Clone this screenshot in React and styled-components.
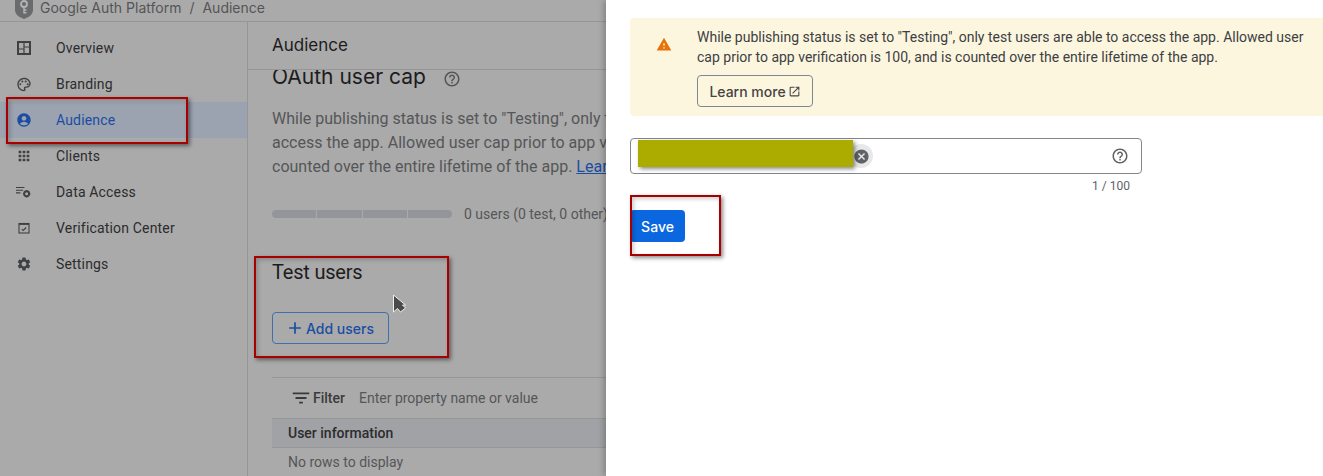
import React from "react";
import styled, { createGlobalStyle } from "styled-components";
import { MdOutlinePalette, MdAccountCircle, MdApps, MdSettings, MdHelpOutline, MdWarning, MdOutlineOpenInNew, MdCancel, MdAdd, MdFilterList } from "react-icons/md";

const Global = createGlobalStyle`
  html, body { margin: 0; padding: 0; background: #aaaaaa; }
  body { font-family: Roboto, "Liberation Sans", sans-serif; overflow: hidden; }
`;
const GS = `Inter, Roboto, sans-serif`;

const Page = styled.div`
  position: relative; width: 1323px; height: 476px; display: flex; overflow: hidden; background: #aaaaaa;
`;
const Console = styled.div`
  width: 606px; flex: none; display: flex; flex-direction: column; height: 476px;
`;
const TopBar = styled.header`
  height: 21px; flex: none; display: flex; align-items: flex-start; gap: 7px; padding-left: 15px;
  border-bottom: 1px solid #969696; font-family: ${GS}; font-size: 14px; color: #555557;
`;
const Crumbs = styled.div`
  display: flex; gap: 8px; line-height: 16px; white-space: nowrap;
`;
const Logo = styled.svg`
  width: 18px; height: 19px; flex: none;
`;
const Body = styled.div`
  flex: 1; display: flex; min-height: 0;
`;
const Side = styled.nav`
  width: 247px; flex: none; border-right: 1px solid #969696; padding-top: 8px;
`;
const NavRow = styled.div`
  height: 36px; display: flex; align-items: center; padding-left: 16px; gap: 16px;
  font-size: 14px; letter-spacing: .17px; color: ${p => (p.$active ? "#1a4da3" : "#2c2c2e")};
  background: ${p => (p.$active ? "#9ba2b0" : "transparent")};
`;
const NavIcon = styled.span`
  width: 16px; height: 16px; display: flex; align-items: center; justify-content: center; flex: none;
  margin-right: 8px; color: ${p => (p.$active ? "#1a4da3" : "#3f4042")};
`;
const Main = styled.main`
  flex: 1; min-width: 0; display: flex; flex-direction: column; overflow: hidden;
`;
const SubHead = styled.div`
  height: 48px; flex: none; display: flex; align-items: center; padding: 0 0 1px 24px; box-sizing: border-box;
  border-bottom: 1px solid #969696; font-family: ${GS}; font-size: 17px; color: #1c1c1e;
`;
const Scroll = styled.div`
  flex: 1; overflow: hidden; padding-left: 24px;
`;
const Inner = styled.div`
  margin-top: -6px; width: 400px;
`;
const H2 = styled.h2`
  margin: 0; font-family: ${GS}; font-weight: 400; font-size: 21px; line-height: 26px; color: #1c1c1e;
  display: flex; align-items: center; gap: 17px; white-space: nowrap;
`;
const HelpWrap = styled.span`
  display: flex; color: #555557; margin-top: 3px;
`;
const Para = styled.p`
  margin: 17px 0 0; font-size: 16px; line-height: 24px; color: #555658; white-space: nowrap;
`;
const InlineLink = styled.a`
  color: #1a4da3; text-decoration: underline;
`;
const Usage = styled.div`
  display: flex; align-items: center; gap: 12px; margin-top: 25px; font-size: 14px; color: #555658; white-space: nowrap; height: 20px;
`;
const Bar = styled.div`
  display: flex; gap: 1px; width: 180px; height: 8px; border-radius: 4px; overflow: hidden; flex: none;
`;
const BarSeg = styled.span`
  flex: 1; background: #93959a;
`;
const TestHead = styled.h2`
  margin: 35px 0 0; font-weight: 400; font-size: 20px; letter-spacing: -.2px; line-height: 26px; color: #1c1c1e;
`;
const AddBtn = styled.button`
  margin-top: 27px; width: 117px; height: 32px; display: flex; align-items: center; justify-content: center; gap: 1px;
  border: 1px solid #3f6fb0; border-radius: 4px; background: transparent; color: #1a4da3;
  font-family: ${GS}; font-weight: 500; font-size: 14px; padding: 0 2px 0 0;
`;
const TableBox = styled.div`
  margin-top: 33px; width: 334px; border-top: 1px solid #969696;
`;
const FilterRow = styled.div`
  height: 40px; display: flex; align-items: center; padding-left: 18px; font-size: 14px; color: #555658; white-space: nowrap;
`;
const FilterLabel = styled.span`
  font-weight: 500; color: #3a3a3c; margin: 0 14px 0 1px;
`;
const HeadRow = styled.div`
  height: 28px; display: flex; align-items: center; padding-left: 16px; background: #a0a2a5;
  border-top: 1px solid #969696; border-bottom: 1px solid #969696; font-size: 14px; font-weight: 500; color: #2c2c2e;
`;
const EmptyRow = styled.div`
  height: 27px; display: flex; align-items: center; padding-left: 16px; font-size: 14px; color: #555658;
`;
const Panel = styled.aside`
  flex: 1; min-width: 0; background: #fff; padding-top: 18px; box-shadow: -2px 0 6px rgba(0,0,0,.25); position: relative;
`;
const Banner = styled.div`
  margin-left: 24px; height: 98px; background: #fdf6df; border-radius: 4px 0 0 4px; display: flex; box-sizing: border-box; padding: 9px 0 0 26px;
`;
const WarnIcon = styled.span`
  width: 16px; height: 16px; margin: 9px 25px 0 0; color: #e8710a; display: flex;
`;
const BannerBody = styled.div`
  font-size: 14px; line-height: 20px; color: #3c4043;
`;
const BannerText = styled.p`
  margin: 0; width: 615px;
`;
const LearnBtn = styled.button`
  margin-top: 8px; width: 116px; height: 32px; display: flex; align-items: center; justify-content: center; gap: 2px;
  border: 1px solid #7c8793; border-radius: 4px; background: transparent; color: #444;
  font-family: ${GS}; font-weight: 500; font-size: 14px; padding: 0;
`;
const Field = styled.div`
  margin: 22px 0 0 24px; width: 512px; height: 36px; box-sizing: border-box; border: 1px solid #80868b; border-radius: 4px;
  display: flex; align-items: center; justify-content: flex-end; padding-right: 12px; position: relative; color: #5f6368;
`;
const ChipClose = styled.span`
  position: absolute; left: 218px; top: 5px; width: 24px; height: 24px; border-radius: 50%; background: #e8e8e9; color: #5f6368;
  display: flex; align-items: center; justify-content: center;
`;
const Redact = styled.div`
  position: absolute; left: 638px; top: 140px; width: 215px; height: 27px; background: #abab00; box-shadow: 2px 2px 4px rgba(0,0,0,.45);
`;
const Counter = styled.div`
  margin-left: 24px; width: 500px; text-align: right; font-size: 12px; line-height: 16px; margin-top: 4px; color: #5f6368;
`;
const SaveBtn = styled.button`
  display: block; margin: 16px 0 0 24px; width: 55px; height: 32px; border: 0; border-radius: 4px; background: #0b67e0; color: #fff;
  font-family: ${GS}; font-weight: 500; font-size: 14px; padding: 0;
`;
const Callout = styled.div`
  position: absolute; box-sizing: border-box; border: 2px solid #a80000; box-shadow: 2px 2px 4px rgba(0,0,0,.45), inset 2px 2px 4px rgba(0,0,0,.2);
  pointer-events: none;
`;
const Pointer = styled.svg`
  position: absolute; left: 392px; top: 294px; width: 16px; height: 24px;
`;

const OverviewIcon = () => (
  <svg width="16" height="16" viewBox="0 0 16 16" fill="none" stroke="currentColor">
    <rect x="2" y="2" width="12" height="12" strokeWidth="2" />
    <path d="M8 2v12M8 7h6M2 9h6" strokeWidth="1.2" />
  </svg>
);
const DataIcon = () => (
  <svg width="18" height="16" viewBox="0 0 18 16" fill="currentColor">
    <path d="M0 2.400h9.500v1.200H0zM0 5.400h8v1.200H0zM0 8.400h5v1.200H0z" />
    <circle cx="12" cy="10" r="2.800" fill="none" stroke="currentColor" strokeWidth="2.200" />
    <path d="M11.300 5.800h1.400v1.400h-1.400zM11.300 12.800h1.400v1.400h-1.400zM7.800 9.300h1.400v1.400H7.800zM14.800 9.300h1.400v1.400h-1.400z" />
  </svg>
);
const VerifyIcon = () => (
  <svg width="14" height="14" viewBox="0 0 14 14" fill="none" stroke="currentColor">
    <rect x="2" y="2.500" width="10" height="9.500" strokeWidth="1.100" />
    <path d="M2 3h10" strokeWidth="1.800" />
    <path d="M4.800 8.200l1.400 1.300 3-3" strokeWidth="1.100" />
  </svg>
);

const navItems = [
  ["Overview", <OverviewIcon />],
  ["Branding", <MdOutlinePalette size={17} />],
  ["Audience", <MdAccountCircle size={18} />, true],
  ["Clients", <MdApps size={20} />],
  ["Data Access", <DataIcon />],
  ["Verification Center", <VerifyIcon />],
  ["Settings", <MdSettings size={18} />],
];

export default function App() {
  return (
    <Page>
      <Global />
      <Console>
        <TopBar>
          <Logo viewBox="0 0 18 19">
            <path d="M0 0h18v10c0 4.500-4.500 7.500-9 9-4.500-1.500-9-4.500-9-9z" fill="#6a6b6d" />
            <circle cx="9" cy="4" r="3" fill="none" stroke="#b4b4b4" strokeWidth="1.800" />
            <path d="M9 6.600v7M9 10h2.500M9 12.800h2.500" stroke="#b4b4b4" strokeWidth="1.500" />
          </Logo>
          <Crumbs>
            <span>Google Auth Platform</span><span>/</span><span>Audience</span>
          </Crumbs>
        </TopBar>
        <Body>
          <Side>
            {navItems.map(([label, icon, active]) => (
              <NavRow key={label} $active={active}>
                <NavIcon $active={active}>{icon}</NavIcon>
                {label}
              </NavRow>
            ))}
          </Side>
          <Main>
            <SubHead>Audience</SubHead>
            <Scroll>
              <Inner>
                <H2>OAuth user cap <HelpWrap><MdHelpOutline size={18} /></HelpWrap></H2>
                <Para>
                  While publishing status is set to "Testing", only test users are able to<br />
                  access the app. Allowed user cap prior to app verification is 100, and is<br />
                  counted over the entire lifetime of the app. <InlineLink>Learn more</InlineLink>
                </Para>
                <Usage>
                  <Bar><BarSeg /><BarSeg /><BarSeg /><BarSeg /></Bar>
                  0 users (0 test, 0 other)
                </Usage>
                <TestHead>Test users</TestHead>
                <AddBtn><MdAdd size={20} />Add users</AddBtn>
                <TableBox>
                  <FilterRow>
                    <MdFilterList size={22} color="#3a3a3c" />
                    <FilterLabel>Filter</FilterLabel>
                    Enter property name or value
                  </FilterRow>
                  <HeadRow>User information</HeadRow>
                  <EmptyRow>No rows to display</EmptyRow>
                </TableBox>
              </Inner>
            </Scroll>
          </Main>
        </Body>
      </Console>
      <Panel>
        <Banner>
          <WarnIcon><MdWarning size={17} /></WarnIcon>
          <BannerBody>
            <BannerText>While publishing status is set to "Testing", only test users are able to access the app. Allowed user cap prior to app verification is 100, and is counted over the entire lifetime of the app.</BannerText>
            <LearnBtn>Learn more<MdOutlineOpenInNew size={13} /></LearnBtn>
          </BannerBody>
        </Banner>
        <Field>
          <ChipClose><MdCancel size={17} /></ChipClose>
          <MdHelpOutline size={18} />
        </Field>
        <Counter>1 / 100</Counter>
        <SaveBtn>Save</SaveBtn>
      </Panel>
      <Redact />
      <Callout style={{ left: 6, top: 97, width: 182, height: 47 }} />
      <Callout style={{ left: 254, top: 256, width: 195, height: 102 }} />
      <Callout style={{ left: 630, top: 195, width: 91, height: 61 }} />
      <Pointer viewBox="0 0 16 24">
        <path d="M1.500 1v17l4-3.500 3 3.500 5-4-3-3h3z" fill="#4a4a4a" stroke="#eee" strokeWidth="1" />
      </Pointer>
    </Page>
  );
}
